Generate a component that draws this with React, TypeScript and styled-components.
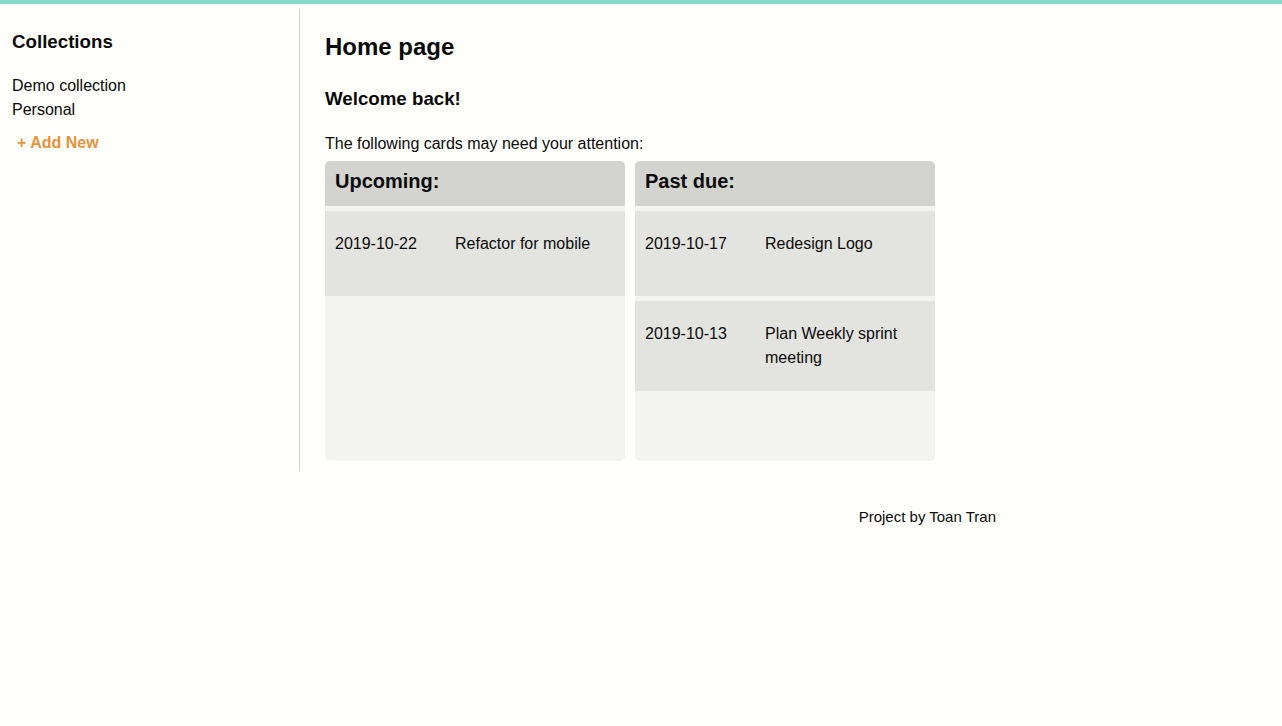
import React from "react";
import styled, { createGlobalStyle } from "styled-components";

interface Card {
  date: string;
  title: string;
}

const upcoming: Card[] = [{ date: "2019-10-22", title: "Refactor for mobile" }];
const pastDue: Card[] = [
  { date: "2019-10-17", title: "Redesign Logo" },
  { date: "2019-10-13", title: "Plan Weekly sprint meeting" },
];

const GlobalStyle = createGlobalStyle`
  html, body {
    margin: 0;
    padding: 0;
    background: #fffffb;
    color: #0a0a0a;
    font-family: "Liberation Sans", Arial, sans-serif;
    font-size: 16px;
  }
`;

// top accent strip
const TopBar = styled.div`
  height: 4px;
  background-color: #88d8c8;
`;

const Layout = styled.div`
  display: flex;
  margin-top: 5px;
`;

const Sidebar = styled.aside`
  width: 287px;
  flex-shrink: 0;
  padding: 0 0 0 12px;
  border-right: 1px solid #cfcfcb;

  > h3 {
    margin: 22px 0 21px;
    font-size: 18.72px;
    line-height: 22px;
    font-weight: 700;
  }
`;

const CollectionList = styled.ul`
  list-style: none;
  margin: 0;
  padding: 0;

  li {
    line-height: 24px;
  }
`;

const AddNew = styled.button`
  display: block;
  margin-top: 9px;
  padding: 0 0 0 5px;
  border: none;
  background: none;
  font-family: inherit;
  font-size: 16px;
  line-height: 24px;
  font-weight: 700;
  color: #e8923b;
  cursor: pointer;
`;

const Main = styled.main`
  flex: 1;
  padding: 0 25px 10px;

  > h2 {
    margin: 24px 0 0;
    font-size: 24px;
    line-height: 28px;
    font-weight: 700;
  }

  > h3 {
    margin: 27px 0 0;
    font-size: 18.72px;
    line-height: 22px;
    font-weight: 700;
  }

  > p {
    margin: 22px 0 5px;
    line-height: 24px;
  }
`;

const Columns = styled.div`
  display: flex;
  gap: 10px;
`;

const Column = styled.section`
  width: 300px;
  height: 300px;
  background-color: #f3f3f0;
  border-radius: 5px;
  overflow: hidden;
  display: flex;
  flex-direction: column;
  gap: 5px;
`;

const ColumnHeader = styled.h3`
  margin: 0;
  padding: 8px 10px 12px;
  height: 25px;
  font-size: 20px;
  line-height: 25px;
  font-weight: 700;
  background-color: #d3d3cf;
`;

const Item = styled.div`
  display: flex;
  min-height: 43px;
  padding: 21px 10px 21px;
  background-color: #e3e3e0;
  line-height: 24px;

  .date {
    width: 120px;
    flex-shrink: 0;
  }
`;

const Footer = styled.footer`
  width: 996px;
  margin-top: 37px;
  text-align: right;
  font-size: 15px;
  line-height: 18px;
`;

function CardColumn({ title, cards }: { title: string; cards: Card[] }) {
  return (
    <Column>
      <ColumnHeader>{title}</ColumnHeader>
      {cards.map((c) => (
        <Item key={c.date}>
          <span className="date">{c.date}</span>
          <span>{c.title}</span>
        </Item>
      ))}
    </Column>
  );
}

export default function App() {
  return (
    <>
      <GlobalStyle />
      <TopBar />
      <Layout>
        <Sidebar>
          <h3>Collections</h3>
          <CollectionList>
            <li>Demo collection</li>
            <li>Personal</li>
          </CollectionList>
          <AddNew>+ Add New</AddNew>
        </Sidebar>
        <Main>
          <h2>Home page</h2>
          <h3>Welcome back!</h3>
          <p>The following cards may need your attention:</p>
          <Columns>
            <CardColumn title="Upcoming:" cards={upcoming} />
            <CardColumn title="Past due:" cards={pastDue} />
          </Columns>
        </Main>
      </Layout>
      <Footer>Project by Toan Tran</Footer>
    </>
  );
}
